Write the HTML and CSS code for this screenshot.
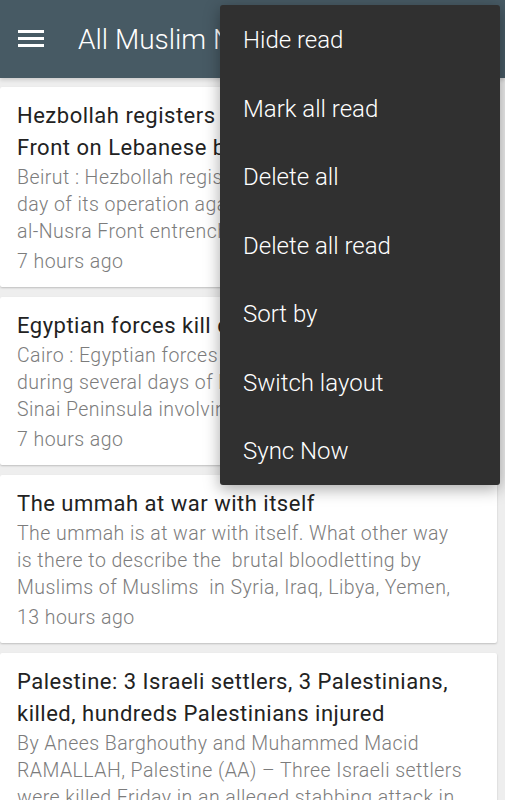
FILE: index.html
```html
<!DOCTYPE html>
<html lang="en">
<head>
    <meta charset="UTF-8">
    <meta name="viewport" content="width=device-width, initial-scale=1.0">
    <title>All Muslim News</title>
    <link rel="stylesheet" href="styles.css">
</head>
<body>
    <div class="toolbar">
        <svg class="menu-icon" width="26" height="18" viewBox="0 0 26 18">
            <rect x="0" y="0" width="26" height="3" fill="#fff"/>
            <rect x="0" y="7" width="26" height="3" fill="#fff"/>
            <rect x="0" y="14" width="26" height="3" fill="#fff"/>
        </svg>
        <div class="title">All Muslim News</div>
    </div>

    <div class="list">
        <div class="card">
            <div class="card-title">Hezbollah registers gains against al&#8209;Nusra Front on Lebanese border</div>
            <div class="card-body">Beirut : Hezbollah registered gains on the second day of its operation against militants of the al&#8209;Nusra Front entrenched in the mountains</div>
            <div class="card-time">7 hours ago</div>
        </div>
        <div class="card">
            <div class="card-title">Egyptian forces kill dozens in Sinai</div>
            <div class="card-body">Cairo : Egyptian forces killed dozens of militants during several days of heavy clashes across the Sinai Peninsula involving heavy weapons and</div>
            <div class="card-time">7 hours ago</div>
        </div>
        <div class="card">
            <div class="card-title">The ummah at war with itself</div>
            <div class="card-body">The ummah is at war with itself. What other way is there to describe the&nbsp; brutal bloodletting by Muslims of Muslims&nbsp; in Syria, Iraq, Libya, Yemen,</div>
            <div class="card-time">13 hours ago</div>
        </div>
        <div class="card">
            <div class="card-title">Palestine: 3 Israeli settlers, 3 Palestinians, killed, hundreds Palestinians injured</div>
            <div class="card-body">By Anees Barghouthy and Muhammed Macid RAMALLAH, Palestine (AA) – Three Israeli settlers were killed Friday in an alleged stabbing attack in</div>
            <div class="card-time">13 hours ago</div>
        </div>
    </div>

    <div class="popup">
        <div class="popup-item">Hide read</div>
        <div class="popup-item">Mark all read</div>
        <div class="popup-item">Delete all</div>
        <div class="popup-item">Delete all read</div>
        <div class="popup-item">Sort by</div>
        <div class="popup-item">Switch layout</div>
        <div class="popup-item">Sync Now</div>
    </div>
</body>
</html>
```

FILE: styles.css
```css
body {
    font-family: Roboto, "Liberation Sans", sans-serif;
    margin: 0;
    background-color: #eeeeee;
    height: 800px;
    overflow: hidden;
    position: relative;
}
.toolbar {
    height: 78px;
    background-color: #475a64;
    display: flex;
    align-items: center;
    padding-left: 18px;
    box-sizing: border-box;
    box-shadow: 0 2px 4px rgba(0, 0, 0, 0.15);
}
.menu-icon {
    flex: none;
}
.title {
    margin-left: 34px;
    color: #fff;
    font-size: 28px;
    font-weight: 300;
    white-space: nowrap;
}
.list {
    padding-top: 9px;
    padding-right: 8px;
}
.card {
    background-color: #fff;
    margin-bottom: 10px;
    padding: 13px 32px 8px 17px;
    border-radius: 2px;
    box-shadow: 0 1px 2px rgba(0, 0, 0, 0.2);
}
.card-title {
    font-size: 22px;
    line-height: 32px;
    letter-spacing: 0.5px;
    color: #222;
}
.card-body {
    font-size: 19.5px;
    line-height: 27px;
    letter-spacing: 0.45px;
    font-weight: 300;
    color: #7c7c7c;
    display: -webkit-box;
    -webkit-line-clamp: 3;
    -webkit-box-orient: vertical;
    overflow: hidden;
}
.card-time {
    font-size: 19.5px;
    line-height: 34px;
    letter-spacing: 0.45px;
    font-weight: 300;
    color: #7c7c7c;
}
.popup {
    position: absolute;
    top: 5px;
    left: 220px;
    width: 280px;
    height: 480px;
    padding-top: 1px;
    background-color: #303030;
    border-radius: 3px;
    box-shadow: 0 4px 16px rgba(0, 0, 0, 0.35);
    box-sizing: border-box;
}
.popup-item {
    height: 68.5px;
    display: flex;
    align-items: center;
    padding-left: 23px;
    color: #fff;
    font-size: 24px;
    font-weight: 300;
}
```
